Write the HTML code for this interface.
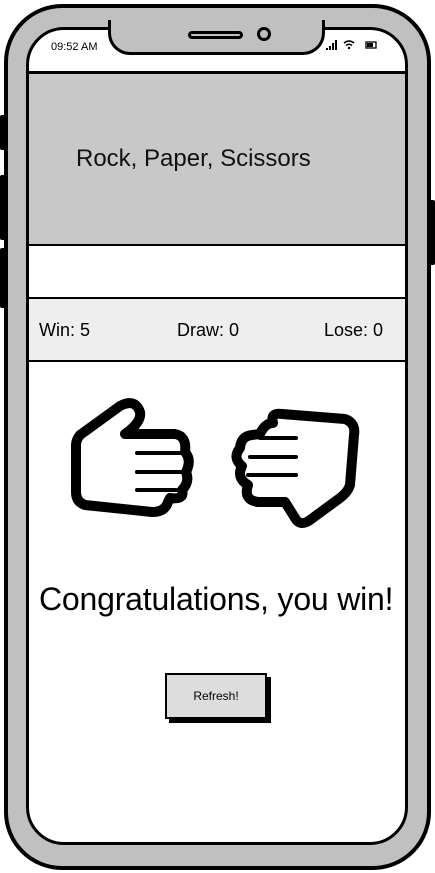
<!DOCTYPE html>
<html><head><style>
*{margin:0;padding:0;box-sizing:border-box}
body{width:435px;height:873px;background:#fff;position:relative;overflow:hidden;font-family:"Liberation Sans",sans-serif}
.abs{position:absolute}
.phone{left:4px;top:4px;width:427px;height:866px;border:4px solid #000;border-radius:58px;background:#c0c0c0}
.screen{left:26px;top:27px;width:382px;height:818px;border:3px solid #000;border-radius:38px;background:#fff;overflow:hidden}
.btn{background:#000;border-radius:2px}
</style></head><body>
<div class="abs btn" style="left:0;top:115px;width:5px;height:35px"></div>
<div class="abs btn" style="left:0;top:175px;width:5px;height:65px"></div>
<div class="abs btn" style="left:0;top:248px;width:5px;height:60px"></div>
<div class="abs btn" style="left:430px;top:200px;width:5px;height:65px"></div>
<div class="abs phone"></div>
<div class="abs screen">
  <div class="abs" style="left:0;top:41px;width:382px;height:175px;background:#c8c8c8;border-top:3px solid #000;border-bottom:2px solid #000"></div>
  <div class="abs" style="left:47px;top:115px;font-size:24px;color:#111">Rock, Paper, Scissors</div>
  <div class="abs" style="left:0;top:267px;width:382px;height:65px;background:#eee;border-top:2px solid #000;border-bottom:2px solid #000"></div>
  <div class="abs" style="left:10px;top:290px;font-size:18px">Win: 5</div>
  <div class="abs" style="left:148px;top:290px;font-size:18px">Draw: 0</div>
  <div class="abs" style="left:295px;top:290px;font-size:18px">Lose: 0</div>
  <div class="abs" style="left:10px;top:551px;font-size:32px;color:#000;letter-spacing:-0.2px">Congratulations, you win!</div>
  <div class="abs" style="left:140px;top:647px;width:102px;height:46px;background:#000"></div>
  <div class="abs" style="left:136px;top:643px;width:102px;height:46px;background:#ddd;border:2px solid #000;font-size:12px;text-align:center;line-height:42px">Refresh!</div>
</div>
<div class="abs" style="left:108px;top:20px;width:217px;height:35px;background:#c0c0c0;border:3px solid #000;border-top:none;border-radius:0 0 22px 22px"></div>
<div class="abs" style="left:188px;top:31px;width:55px;height:8px;border:3px solid #000;border-radius:5px;background:#c0c0c0"></div>
<div class="abs" style="left:257px;top:27px;width:14px;height:14px;border:3px solid #000;border-radius:50%;background:#c0c0c0"></div>
<div class="abs" style="left:51px;top:41px;font-size:11px">09:52 AM</div>
<svg class="abs" style="left:324px;top:38px" width="60" height="14">
<rect x="2" y="10" width="2" height="2"/><rect x="5" y="8" width="2" height="4"/><rect x="8" y="5" width="2" height="7"/><rect x="11" y="2" width="2" height="10"/>
<path d="M20 5 Q25 1 30 5 M22 7.5 Q25 5 28 7.5" stroke="#000" stroke-width="1.5" fill="none"/><circle cx="25" cy="10" r="1.2"/>
<rect x="42" y="4" width="10" height="6" fill="none" stroke="#000" stroke-width="1.3"/><rect x="43" y="5" width="6" height="4"/>
</svg>
<svg class="abs" style="left:60px;top:390px" width="310" height="150" viewBox="0 0 310 150" fill="#fff" stroke="#000" stroke-width="10" stroke-linejoin="round" stroke-linecap="round">
<path d="M20 45 L60 16 Q75 8 80 22 Q82 32 65 44 L115 44 Q127 46 125 62 Q132 70 126 82 Q130 92 122 100 Q125 110 110 108 L108 112 Q105 122 92 122 L25 115 Q16 112 16 102 L16 55 Q16 50 20 45 Z"/>
<path d="M77 63 L121 63 M77 82 L124 82 M77 100 L116 100" stroke-width="4"/>
<path d="M213 33 Q210 22 222 24 L285 29 Q296 33 294 45 L290 95 Q288 102 280 108 L250 130 Q240 137 235 128 L225 112 L198 112 Q183 110 188 95 Q176 88 182 76 Q172 68 180 58 Q181 46 192 45 L200 44 Q205 33 213 33 Z"/>
<path d="M200 48 L236 48 M190 67 L236 67 M188 85 L236 85" stroke-width="4"/>
</svg>
</body></html>
